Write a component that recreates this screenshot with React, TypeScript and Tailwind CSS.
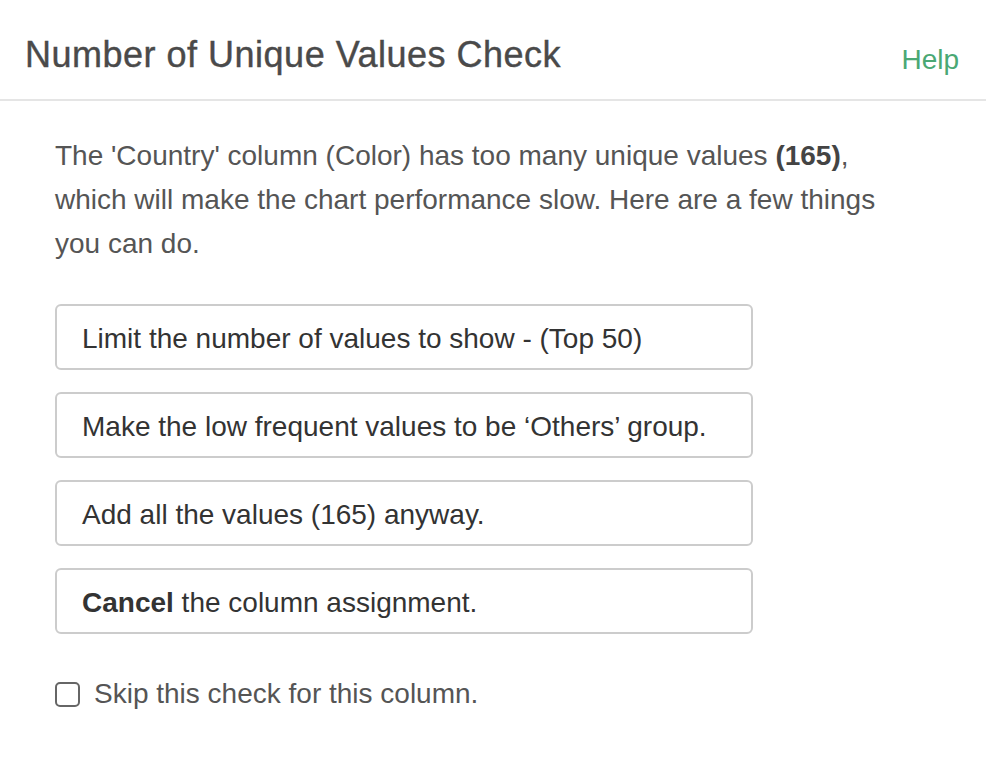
import React, { useState } from 'react'

const options: { bold?: string; text: string }[] = [
  { text: 'Limit the number of values to show - (Top 50)' },
  { text: 'Make the low frequent values to be ‘Others’ group.' },
  { text: 'Add all the values (165) anyway.' },
  { bold: 'Cancel', text: ' the column assignment.' },
]

export default function App() {
  const [skip, setSkip] = useState<boolean>(false)

  return (
    <div className="w-[986px] h-[784px] bg-white font-['Liberation_Sans',Arial,sans-serif]">
      {/* header */}
      <div className="flex items-center justify-between h-[101px] pl-[25px] pr-[27px] border-b-2 border-[#e5e5e5]">
        <h1 className="text-[36px] leading-none text-[#4a4a4a] pt-[10px] [-webkit-text-stroke:0.4px_#4a4a4a] tracking-[0.5px]">Number of Unique Values Check</h1>
        <a href="#help" className="text-[28px] text-[#4aa874] pt-[20px]">Help</a>
      </div>

      {/* body */}
      <div className="pl-[55px] pr-[60px] pt-[33px]">
        <p className="text-[28px] leading-[44px] text-[#555555] w-[860px]">
          The 'Country' column (Color) has too many unique values <b className="text-[#444444]">(165)</b>,
          which will make the chart performance slow. Here are a few things you can do.
        </p>

        <div className="flex flex-col gap-[22px] mt-[38px] w-[698px]">
          {options.map((o, i) => (
            <button
              key={i}
              type="button"
              className="h-[66px] px-[25px] pt-[4px] text-left text-[28px] text-[#333333] border-2 border-[#cccccc] rounded-[6px] bg-white"
            >
              {o.bold && <b>{o.bold}</b>}
              {o.text}
            </button>
          ))}
        </div>

        <label className="flex items-center gap-[14px] mt-[39px] text-[28px] text-[#555555] cursor-pointer">
          <span
            onClick={() => setSkip(!skip)}
            className="w-[25px] h-[25px] border-2 border-[#666666] rounded-[5px] bg-white"
          />
          Skip this check for this column.
        </label>
      </div>
    </div>
  )
}
